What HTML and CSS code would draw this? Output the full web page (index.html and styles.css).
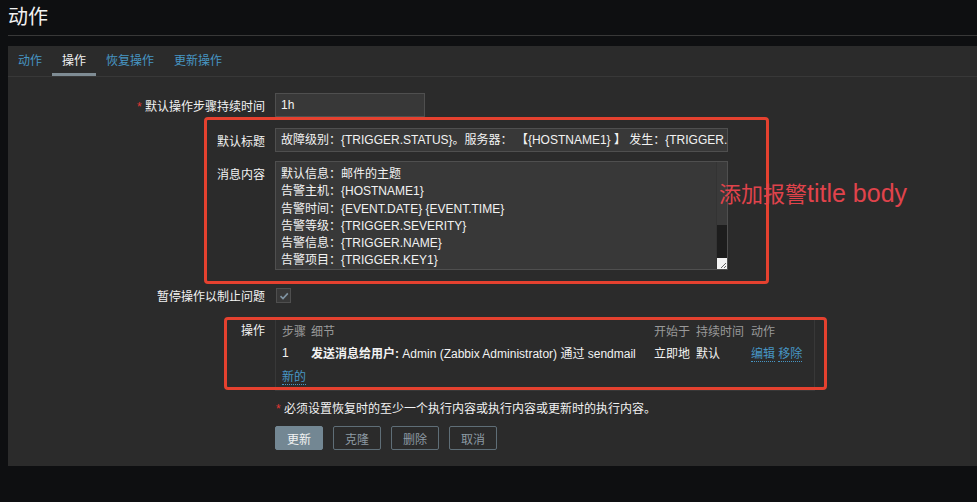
FILE: index.html
```html
<!DOCTYPE html>
<html lang="zh">
<head>
<meta charset="utf-8">
<title>动作</title>
<link rel="stylesheet" href="styles.css">
</head>
<body>
<header class="page-header"><h1 class="page-title">动作</h1></header>
<main class="panel">
  <nav class="tabs">
    <a class="tab">动作</a>
    <a class="tab active">操作</a>
    <a class="tab">恢复操作</a>
    <a class="tab">更新操作</a>
  </nav>
  <div class="form">
    <div class="row row-duration">
      <label class="lbl"><span class="req">*</span> 默认操作步骤持续时间</label>
      <div class="field"><div class="input input-short">1h</div></div>
    </div>
    <div class="row row-subject">
      <label class="lbl">默认标题</label>
      <div class="field"><div class="input input-long">故障级别：{TRIGGER.STATUS}。服务器： 【{HOSTNAME1} 】 发生：{TRIGGER.</div></div>
    </div>
    <div class="row row-message">
      <label class="lbl lbl-top">消息内容</label>
      <div class="field">
        <div class="textarea">
          <div class="ta-text">
            <div>默认信息：邮件的主题</div>
            <div>告警主机：{HOSTNAME1}</div>
            <div>告警时间：{EVENT.DATE} {EVENT.TIME}</div>
            <div>告警等级：{TRIGGER.SEVERITY}</div>
            <div>告警信息：{TRIGGER.NAME}</div>
            <div>告警项目：{TRIGGER.KEY1}</div>
          </div>
          <div class="ta-scroll"><div class="ta-track"></div><div class="ta-thumb"></div><div class="ta-resize"><svg width="8" height="8" viewBox="0 0 8 8"><path d="M7 2 L2 7 M7 5 L5 7" stroke="#666" stroke-width="1" fill="none"/></svg></div></div>
        </div>
      </div>
    </div>
    <div class="row row-check">
      <label class="lbl">暂停操作以制止问题</label>
      <div class="field"><span class="checkbox"><svg width="12" height="12" viewBox="0 0 12 12"><path d="M2.5 6.2 L5 8.6 L9.8 3.4" stroke="#8094a3" stroke-width="1.6" fill="none"/></svg></span></div>
    </div>
    <div class="row row-ops">
      <label class="lbl lbl-top">操作</label>
      <div class="field">
        <div class="ops">
          <table class="ops-table">
            <thead>
              <tr><th class="c-step">步骤</th><th class="c-detail">细节</th><th class="c-start">开始于</th><th class="c-dur">持续时间</th><th class="c-act">动作</th></tr>
            </thead>
            <tbody>
              <tr><td>1</td><td><b>发送消息给用户:</b> Admin (Zabbix Administrator) 通过 sendmail</td><td>立即地</td><td>默认</td><td><a class="link">编辑</a> <a class="link">移除</a></td></tr>
              <tr><td colspan="5"><a class="link">新的</a></td></tr>
            </tbody>
          </table>
        </div>
      </div>
    </div>
    <div class="row row-note">
      <span class="lbl"></span>
      <div class="field note"><span class="req">*</span> 必须设置恢复时的至少一个执行内容或执行内容或更新时的执行内容。</div>
    </div>
    <div class="row row-buttons">
      <span class="lbl"></span>
      <div class="field buttons">
        <button class="btn primary">更新</button>
        <button class="btn">克隆</button>
        <button class="btn">删除</button>
        <button class="btn">取消</button>
      </div>
    </div>
  </div>
  <div class="mark mark-one"></div>
  <div class="mark mark-two"></div>
  <div class="mark-text">添加报警<span class="mark-latin">title body</span></div>
</main>
</body>
</html>
```
FILE: styles.css
```css
* { box-sizing: border-box; }
html, body { margin: 0; padding: 0; }
body {
  background: #0e0f11;
  color: #f2f2f2;
  font-family: "Liberation Sans", "Noto Sans CJK SC", sans-serif;
  font-size: 12px;
  width: 977px;
  height: 502px;
  overflow: hidden;
}
.page-header {
  margin-left: 8px;
  height: 36px;
  border-bottom: 1px solid #383838;
}
.page-title {
  margin: 0;
  font-size: 20px;
  font-weight: normal;
  line-height: 32px;
  font-family: "Noto Sans CJK SC", sans-serif;
  color: #f2f2f2;
}
.panel {
  position: relative;
  margin: 10px 0 0 8px;
  background: #2b2b2b;
  height: 420px;
}
.tabs {
  display: flex;
  height: 31px;
  border-bottom: 1px solid #383838;
}
.tab {
  padding: 2px 10px 0;
  height: 30px;
  line-height: 27px;
  color: #4796c4;
  border-bottom: 3px solid transparent;
  cursor: pointer;
}
.tab.active {
  color: #f2f2f2;
  border-bottom-color: #7f8c94;
}
.form {
  padding-top: 16px;
  display: flex;
  flex-direction: column;
}
.row {
  display: grid;
  grid-template-columns: 257px 1fr;
  column-gap: 10px;
  align-items: center;
}
.lbl {
  text-align: right;
  color: #f2f2f2;
  white-space: nowrap;
}
.lbl-top { align-self: start; }
.req { color: #e33734; }
.input {
  height: 24px;
  line-height: 22px;
  padding: 0 5px;
  background: #383838;
  border: 1px solid #4f4f4f;
  color: #f2f2f2;
  white-space: nowrap;
  overflow: hidden;
}
.input-short { width: 150px; }
.input-long { width: 453px; }
.row-subject { margin-top: 11px; }
.row-message { margin-top: 9px; }
.row-message .lbl-top { padding-top: 4px; }
.textarea {
  width: 453px;
  height: 109px;
  background: #383838;
  border: 1px solid #4f4f4f;
  display: flex;
}
.ta-text {
  flex: 1;
  padding: 4px 5px;
  line-height: 17.3px;
}
.ta-scroll {
  width: 11px;
  display: flex;
  flex-direction: column;
  border-left: 1px solid #333;
}
.ta-track { height: 63px; background: #3a3a3a; }
.ta-thumb { flex: 1; background: #1d1d1d; }
.ta-resize {
  height: 11px;
  background: #f4f4f4;
  display: flex;
  align-items: flex-end;
  justify-content: flex-end;
}
.ta-resize svg { display: block; }
.row-check { margin-top: 17px; height: 14px; }
.checkbox {
  display: flex;
  align-items: center;
  justify-content: center;
  width: 15px;
  height: 15px;
  margin-left: 1px;
  background: #383838;
  border: 1px solid #4f4f4f;
}
.row-ops { margin-top: 16px; }
.row-ops .lbl-top { padding-top: 4px; }
.ops {
  width: 540px;
  border: 1px solid #383838;
  border-top-color: #2b2b2b;
  padding: 2px 0 3px 6px;
}
.ops-table {
  border-collapse: collapse;
  width: 100%;
}
.ops-table th {
  font-weight: normal;
  color: #999;
  text-align: left;
  height: 21px;
  padding: 0;
}
.ops-table td {
  padding: 0;
  height: 23px;
  white-space: nowrap;
  color: #f2f2f2;
}
.ops-table b { font-weight: bold; }
.c-step { width: 29px; }
.c-detail { width: 343px; }
.c-start { width: 42px; }
.c-dur { width: 55px; }
.link {
  color: #4796c4;
  border-bottom: 1px dotted #4796c4;
  cursor: pointer;
}
.row-note { margin-top: 8px; }
.note { padding-left: 1px; }
.row-buttons { margin-top: 10px; }
.buttons { display: flex; gap: 10px; }
.btn {
  width: 48px;
  height: 24px;
  padding: 0;
  font-family: "Liberation Sans", "Noto Sans CJK SC", sans-serif;
  font-size: 12px;
  background: transparent;
  border: 1px solid #5f6e77;
  border-radius: 2px;
  color: #8d9aa3;
}
.btn.primary {
  background: #738793;
  border-color: #738793;
  color: #f2f2f2;
}
.mark {
  position: absolute;
  border: 3px solid #e5412f;
  border-radius: 4px;
}
.mark-one { left: 196px; top: 71px; width: 565px; height: 167px; }
.mark-two { left: 216px; top: 271px; width: 603px; height: 73px; }
.mark-text {
  position: absolute;
  left: 711px;
  top: 131px;
  font-family: "Noto Sans CJK SC", sans-serif;
  font-size: 22px;
  line-height: 30px;
  color: #e0434b;
  white-space: nowrap;
}
.mark-latin {
  font-family: "Liberation Sans", sans-serif;
  font-size: 25px;
}
```
